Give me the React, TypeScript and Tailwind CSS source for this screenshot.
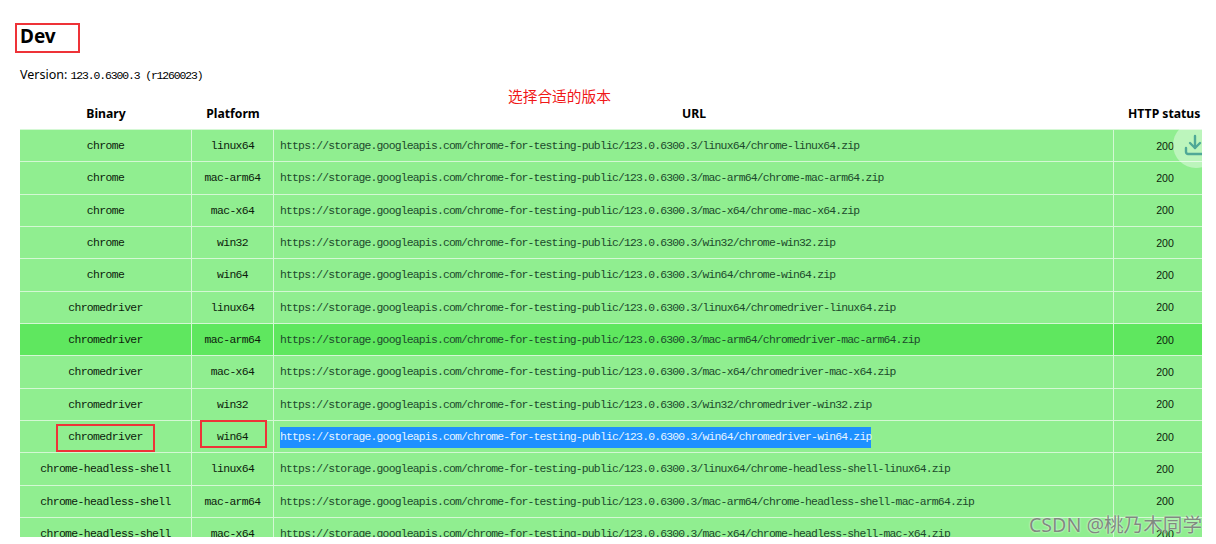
import { Download } from "lucide-react";

const base = "https://storage.googleapis.com/chrome-for-testing-public/123.0.6300.3/";
const rows: [string, string][] = [
  ["chrome", "linux64"],
  ["chrome", "mac-arm64"],
  ["chrome", "mac-x64"],
  ["chrome", "win32"],
  ["chrome", "win64"],
  ["chromedriver", "linux64"],
  ["chromedriver", "mac-arm64"],
  ["chromedriver", "mac-x64"],
  ["chromedriver", "win32"],
  ["chromedriver", "win64"],
  ["chrome-headless-shell", "linux64"],
  ["chrome-headless-shell", "mac-arm64"],
  ["chrome-headless-shell", "mac-x64"],
];

const mono = "font-['Liberation_Mono','Noto_Sans_CJK_SC',monospace] text-[11.4px]";

export default function App() {
  return (
    <div className="relative h-[537px] w-[1202px] overflow-hidden bg-white font-['Noto_Sans','Noto_Sans_CJK_SC',sans-serif] text-black">
      <div className="pl-5 pt-[21px]">
        <h2 className="h-[30px] text-[19px] font-bold leading-[30px]">Dev</h2>
        <p className="mt-[14px] h-[20px] text-[12.5px] leading-[20px]">
          Version: <span className={`${mono} tracking-[-1.1px]`}>123.0.6300.3 (r1260023)</span>
        </p>

        <div className="mt-[13px] flex h-[31px] items-center pt-[1px] text-[12.2px] font-bold">
          <div className="w-[172px] text-center">Binary</div>
          <div className="w-[82px] text-center">Platform</div>
          <div className="w-[840px] text-center">URL</div>
          <div className="w-[88px] whitespace-nowrap pl-[14px] text-left">HTTP status</div>
        </div>

        <div className="flex flex-col bg-[#90ee90]">
          {rows.map(([binary, platform], i) => (
            <div
              key={binary + platform}
              className={`flex h-[32.33px] items-center border-t border-[#d4f8d4] text-[#0c1c0c] ${
                i === 6 ? "bg-[#5fe75f]" : "bg-[#90ee90]"
              }`}
            >
              <div className={`flex h-full w-[172px] items-center justify-center border-r border-[#d4f8d4] pt-[2px] tracking-[-0.62px] ${mono}`}>{binary}</div>
              <div className={`flex h-full w-[82px] items-center justify-center border-r border-[#d4f8d4] pt-[2px] tracking-[-0.62px] ${mono}`}>{platform}</div>
              <div className={`flex h-full w-[840px] items-center border-r border-[#d4f8d4] pl-[6px] pt-[2px] tracking-[-0.8px] ${mono}`}>
                <span className={`whitespace-nowrap ${i === 9 ? "bg-[#1e90ff] py-[2px] text-[#e8f4ff]" : "text-[#1c4a2c]"}`}>
                  {`${base}${platform}/${binary}-${platform}.zip`}
                </span>
              </div>
              <div className="flex h-full w-[88px] items-center justify-center pl-[14px] pt-[2px] font-['Liberation_Sans',sans-serif] text-[10.6px]">200</div>
            </div>
          ))}
        </div>
      </div>

      <div className="absolute left-[508px] top-[86px] whitespace-nowrap text-[14.7px] leading-[20px] text-[#f01818]">选择合适的版本</div>

      <div className="absolute left-[15px] top-[23px] h-[30px] w-[65px] border-2 border-[#ee3338]" />
      <div className="absolute left-[56px] top-[424px] h-[28px] w-[99px] border-2 border-[#ee3338]" />
      <div className="absolute left-[200px] top-[420px] h-[28px] w-[67px] border-2 border-[#ee3338]" />

      <div className="absolute left-[1173px] top-[122px] flex h-[46px] w-[46px] items-center justify-center rounded-full bg-white/40">
        <Download className="ml-[-2px] h-[24px] w-[24px] text-[#4fa897]" strokeWidth={2.4} />
      </div>

      <div className="absolute right-0 top-[512px] whitespace-nowrap text-[19.6px] leading-[25px] text-[#808a80] [text-shadow:0_0_2px_white]">
        CSDN @桃乃木同学
      </div>
    </div>
  );
}
